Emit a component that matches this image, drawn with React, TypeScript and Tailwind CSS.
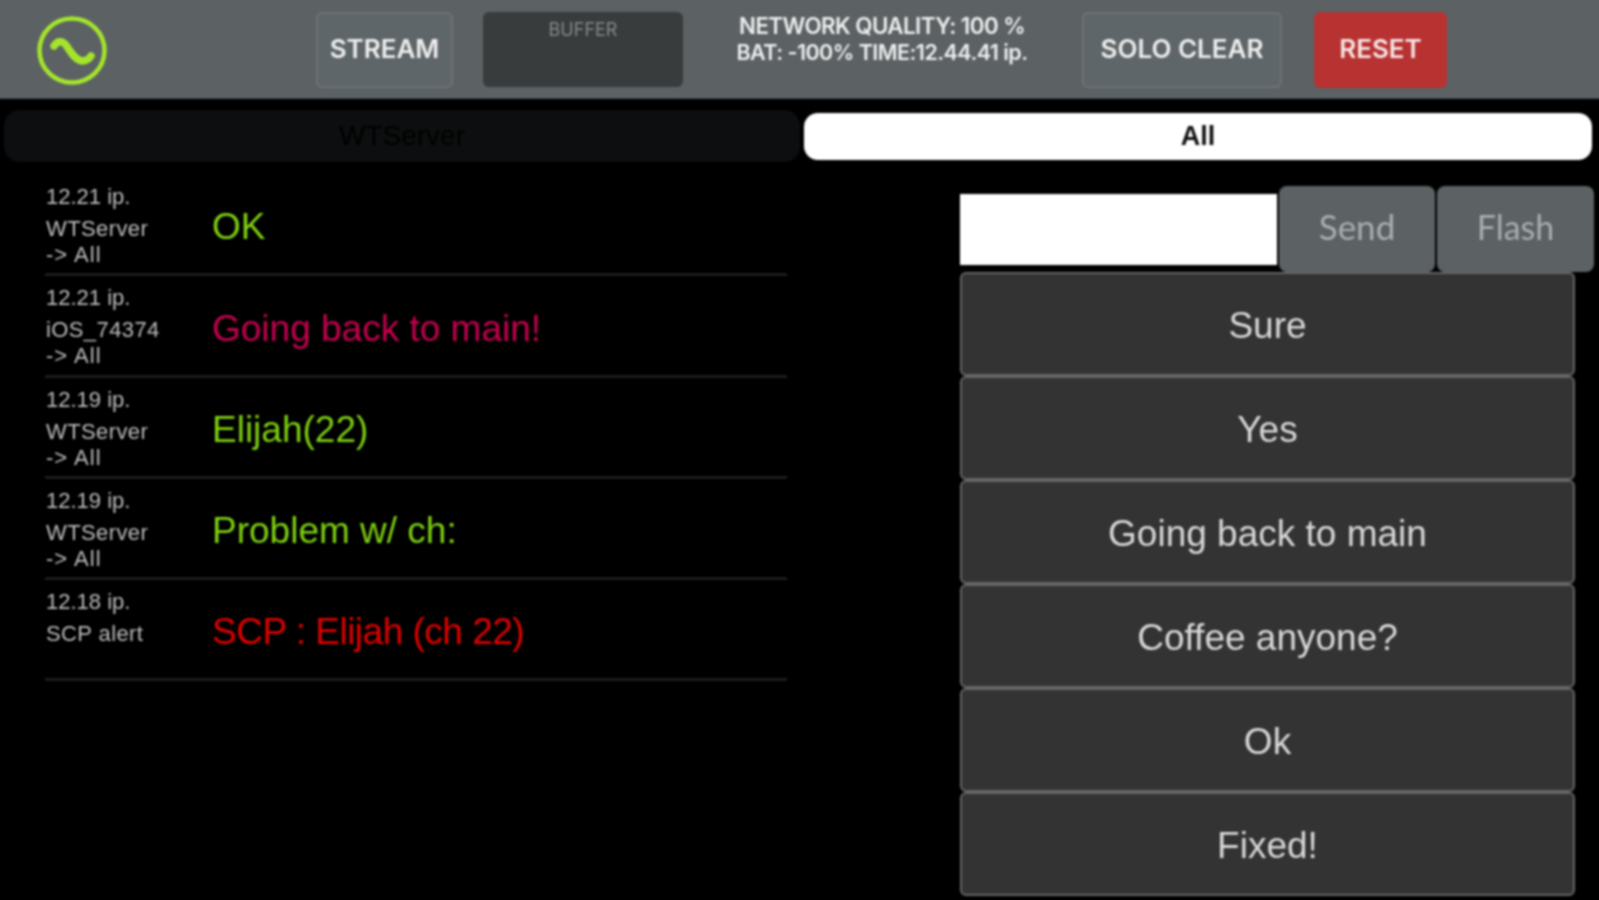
const messages = [
  { time: "12.21 ip.", from: "WTServer", to: "-> All", text: "OK", color: "text-[#7ed00f]" },
  { time: "12.21 ip.", from: "iOS_74374", to: "-> All", text: "Going back to main!", color: "text-[#c4004f]" },
  { time: "12.19 ip.", from: "WTServer", to: "-> All", text: "Elijah(22)", color: "text-[#7ed00f]" },
  { time: "12.19 ip.", from: "WTServer", to: "-> All", text: "Problem w/ ch:", color: "text-[#7ed00f]" },
  { time: "12.18 ip.", from: "SCP alert", to: "", text: "SCP : Elijah (ch 22)", color: "text-[#e00000] tracking-[-0.5px]" },
];

const quick = ["Sure", "Yes", "Going back to main", "Coffee anyone?", "Ok", "Fixed!"];

function Logo() {
  return (
    <svg width="70" height="72" viewBox="0 0 70 72" className="shrink-0">
      <ellipse cx="35" cy="36.5" rx="32.5" ry="32" fill="none" stroke="#a4e52c" strokeWidth="4.5" />
      <path d="M17 32 C20 27 25 26 29 31 C33 37 38 46 45 47 C49 47 52 45 54 42" fill="none" stroke="#a4e52c" strokeWidth="7.5" strokeLinecap="round" />
    </svg>
  );
}

export default function App() {
  return (
    <div className="w-[1599px] h-[900px] overflow-hidden bg-black">
      {/* 4px bleed on every side so the soft edge of the blur stays off screen */}
      <div className="w-[1607px] h-[908px] -mt-[4px] -ml-[4px] bg-black font-['Liberation_Sans',sans-serif] blur-[1px]">
        {/* top bar */}
        <div className="h-[103px] pt-[5px] bg-[#5c6164] flex items-center pl-[41px] border-b border-[#44484a] font-['Inter',sans-serif] font-semibold">
          <Logo />
          <button className="ml-[209px] w-[137px] h-[76px] pb-[2px] rounded-md border-2 border-[#6c7275] bg-[#5f6669] text-[#eeeeee] text-[26px]">STREAM</button>
          <div className="ml-[30px] w-[200px] h-[75px] rounded-md bg-[#383c3d] text-[#85898a] text-[18px] font-normal text-center pt-[8px] leading-[20px]">BUFFER</div>
          <div className="ml-[20px] w-[358px] mb-[22px] text-center text-[#eeeeee] text-[21.5px] leading-[26px] tracking-tight whitespace-nowrap">
            <div className="text-[22.3px]">NETWORK QUALITY: 100 %</div>
            <div>BAT: -100% TIME:12.44.41 ip.</div>
          </div>
          <button className="ml-[21px] w-[200px] h-[76px] pb-[2px] rounded-md border-2 border-[#6c7275] bg-[#5f6669] text-[#eeeeee] text-[26px]">SOLO CLEAR</button>
          <button className="ml-[32px] w-[133px] h-[76px] pb-[2px] rounded-md bg-[#b83232] text-[#f5e6e6] text-[26px]">RESET</button>
        </div>

        {/* recipient tabs */}
        <div className="flex items-center pt-[11px] pl-[8px] gap-[4px]">
          <div className="w-[796px] h-[52px] rounded-[16px] bg-[#0d0e0f] flex items-center justify-center text-[#000000] text-[28px]">WTServer</div>
          <div className="w-[788px] h-[47px] rounded-[14px] bg-white flex items-center justify-center text-[#111111] text-[27px] font-bold">All</div>
        </div>

        <div className="flex">
          {/* message log */}
          <div className="w-[964px] shrink-0 pl-[49px] pt-[13px]">
            {messages.map((m, i) => (
              <div key={i} className="w-[742px] h-[101.25px] flex items-center border-b-[3px] border-[#1c1c1c]">
                <div className="w-[167px] shrink-0 self-start pl-[1px] text-[#bdbdbd] text-[22px] leading-[26px] pt-[9px]">
                  <div>{m.time}</div>
                  <div className="mt-[6px] tracking-[0.4px]">{m.from}</div>
                  {m.to && <div className="tracking-[1px]">{m.to}</div>}
                </div>
                <div className={`text-[37px] pt-[6px] ${m.color}`}>{m.text}</div>
              </div>
            ))}
          </div>

          {/* quick replies */}
          <div className="flex-1 pt-[24px]">
            <div className="flex items-center h-[86px]">
              <div className="w-[317px] h-[71px] bg-white" />
              <button className="ml-[2px] w-[156px] h-[86px] rounded-lg bg-[#5c6164] text-[#a9adaf] text-[35px] pb-[6px] font-['Lato',sans-serif]">Send</button>
              <button className="ml-[2px] w-[157px] h-[86px] rounded-lg bg-[#5c6164] text-[#a9adaf] text-[34px] pb-[6px] font-['Lato',sans-serif]">Flash</button>
            </div>
            <div className="flex flex-col w-[615px]">
              {quick.map((q) => (
                <button key={q} className="h-[104px] rounded-md bg-[#333333] border-2 border-[#666666] text-[#d8d8d8] text-[37px] pt-[4px]">{q}</button>
              ))}
            </div>
          </div>
        </div>
      </div>
    </div>
  );
}
